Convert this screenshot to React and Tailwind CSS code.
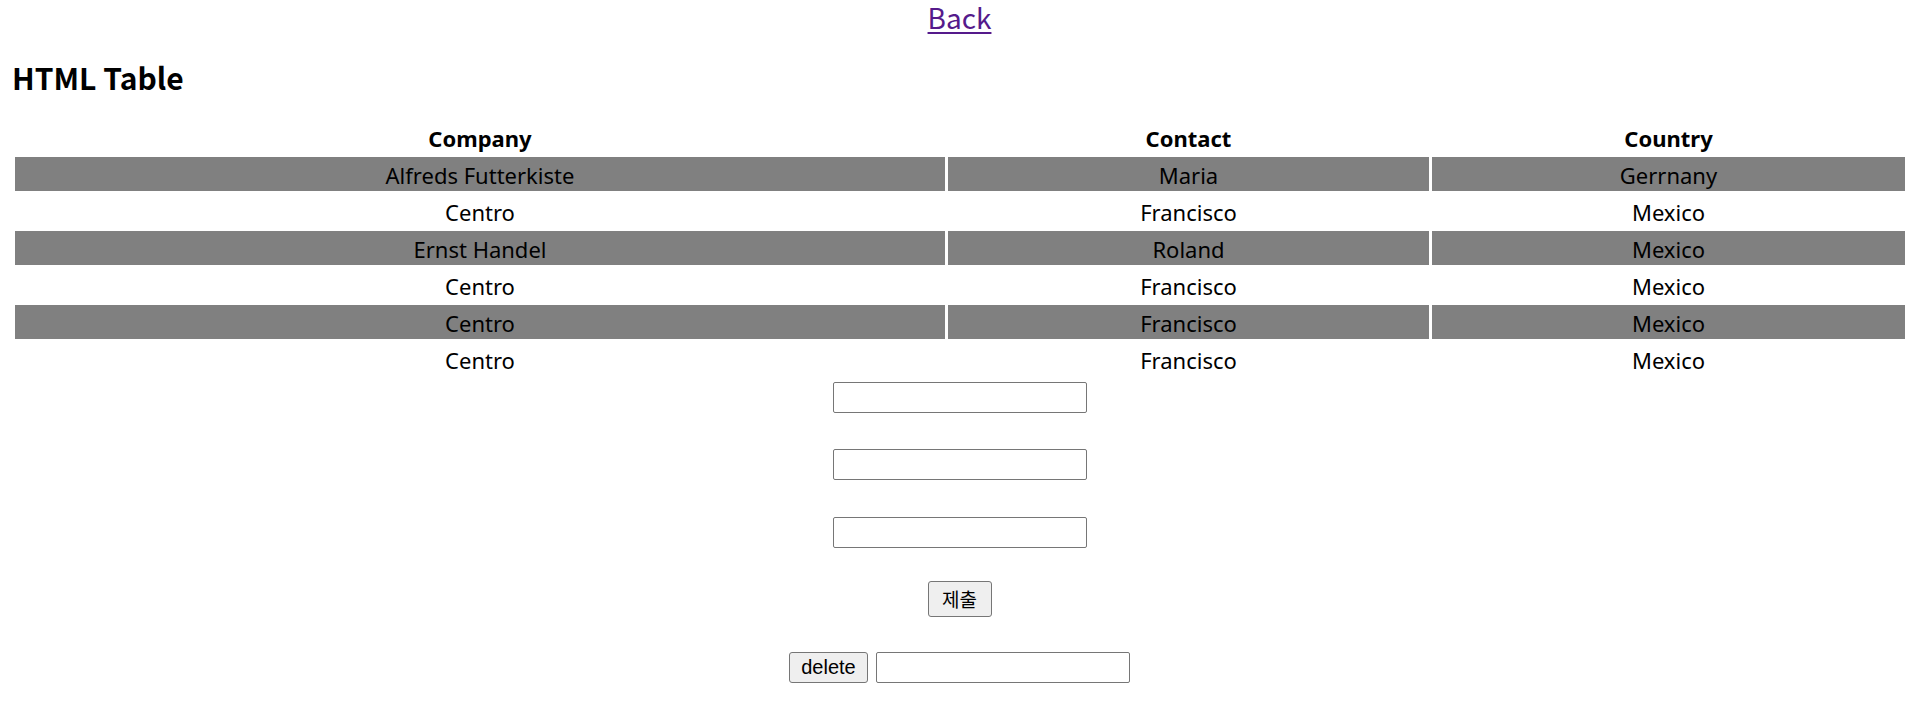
import React from "react";

const rows = [
  ["Alfreds Futterkiste", "Maria", "Gerrnany"],
  ["Centro", "Francisco", "Mexico"],
  ["Ernst Handel", "Roland", "Mexico"],
  ["Centro", "Francisco", "Mexico"],
  ["Centro", "Francisco", "Mexico"],
  ["Centro", "Francisco", "Mexico"],
];

const kr = "font-['Noto_Sans_CJK_KR',sans-serif]";

const TextBox = ({ className = "" }) => (
  <input
    type="text"
    className={`w-[254px] h-[31px] border border-[#767676] rounded-[2px] bg-white px-[3px] outline-none ${className}`}
  />
);

const App = () => {
  return (
    <div className={`w-[1919px] min-h-[718px] bg-white text-black ${kr}`}>
      {/* Back link */}
      <div className="h-[34px] text-center text-[28px] leading-[34px]">
        <a href="#" className="text-[#551a8b] underline underline-offset-[3px]">
          Back
        </a>
      </div>

      <h2 className="mt-[25px] ml-[12px] h-[36px] text-[30px] leading-[36px] font-bold">
        HTML Table
      </h2>

      {/* Table */}
      <div className="mt-[25px] ml-[15px] grid grid-cols-[930px_481px_473px] gap-[3px] text-[22px] font-['Noto_Sans',sans-serif]">
        <div className="h-[34px] pt-[2px] leading-[32px] text-center font-bold">Company</div>
        <div className="h-[34px] pt-[2px] leading-[32px] text-center font-bold">Contact</div>
        <div className="h-[34px] pt-[2px] leading-[32px] text-center font-bold">Country</div>
        {rows.map((row, i) =>
          row.map((cell, j) => (
            <div
              key={`${i}-${j}`}
              className={`h-[34px] pt-[2px] leading-[32px] text-center ${
                i % 2 === 0 ? "bg-[#808080]" : "bg-white"
              }`}
            >
              {cell}
            </div>
          ))
        )}
      </div>

      {/* Form */}
      <div className="flex flex-col items-center">
        <TextBox className="mt-[6px]" />
        <TextBox className="mt-[36px]" />
        <TextBox className="mt-[37px]" />
        <button className="mt-[33px] w-[64px] h-[36px] border border-[#767676] rounded-[3px] bg-[#efefef] text-[19px] leading-[34px] font-['Noto_Sans_CJK_KR',sans-serif]">
          제출
        </button>
        <div className="mt-[35px] flex items-center gap-[8px]">
          <button className="w-[79px] h-[31px] border border-[#767676] rounded-[3px] bg-[#efefef] text-[20px] leading-[29px] font-['Liberation_Sans',Arial,sans-serif]">
            delete
          </button>
          <TextBox />
        </div>
      </div>
    </div>
  );
};

export default App;
